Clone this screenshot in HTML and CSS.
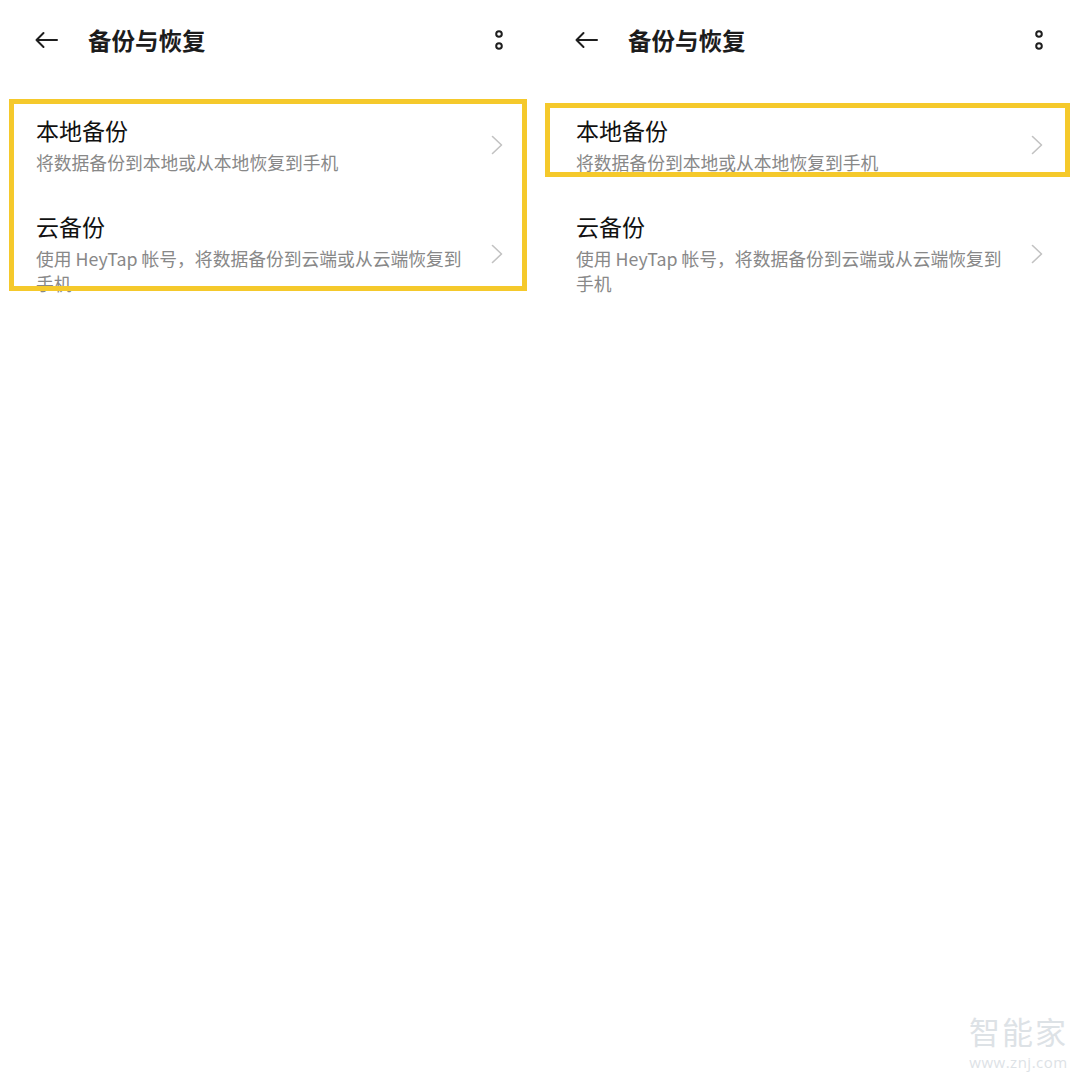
FILE: index.html
```html
<!DOCTYPE html>
<html lang="zh-CN">
<head>
<meta charset="utf-8">
<title>备份与恢复</title>
<link rel="stylesheet" href="styles.css">
</head>
<body>
<div class="screen">
  <section class="panel">
    <header class="bar">
      <svg class="back" width="24" height="18" viewBox="0 0 24 18"><path d="M23 9H2.5M9.5 2L2.5 9L9.5 16" fill="none" stroke="#1e1e1e" stroke-width="2" stroke-linecap="round" stroke-linejoin="round"/></svg>
      <h1 class="title">备份与恢复</h1>
      <svg class="more" width="10" height="20" viewBox="0 0 10 20"><circle cx="5" cy="4" r="2.8" fill="none" stroke="#1e1e1e" stroke-width="2"/><circle cx="5" cy="16" r="2.8" fill="none" stroke="#1e1e1e" stroke-width="2"/></svg>
    </header>
    <div class="list">
      <div class="item">
        <div class="text">
          <div class="item-title">本地备份</div>
          <div class="item-sub">将数据备份到本地或从本地恢复到手机</div>
        </div>
        <svg class="chev" width="12" height="20" viewBox="0 0 12 20"><path d="M1.5 1.5L10.5 10L1.5 18.5" fill="none" stroke="#c2c2c2" stroke-width="1.6" stroke-linecap="round" stroke-linejoin="round"/></svg>
      </div>
      <div class="item">
        <div class="text">
          <div class="item-title">云备份</div>
          <div class="item-sub">使用 HeyTap 帐号，将数据备份到云端或从云端恢复到手机</div>
        </div>
        <svg class="chev" width="12" height="20" viewBox="0 0 12 20"><path d="M1.5 1.5L10.5 10L1.5 18.5" fill="none" stroke="#c2c2c2" stroke-width="1.6" stroke-linecap="round" stroke-linejoin="round"/></svg>
      </div>
      <div class="hl hl-both"></div>
    </div>
  </section>
  <section class="panel">
    <header class="bar">
      <svg class="back" width="24" height="18" viewBox="0 0 24 18"><path d="M23 9H2.5M9.5 2L2.5 9L9.5 16" fill="none" stroke="#1e1e1e" stroke-width="2" stroke-linecap="round" stroke-linejoin="round"/></svg>
      <h1 class="title">备份与恢复</h1>
      <svg class="more" width="10" height="20" viewBox="0 0 10 20"><circle cx="5" cy="4" r="2.8" fill="none" stroke="#1e1e1e" stroke-width="2"/><circle cx="5" cy="16" r="2.8" fill="none" stroke="#1e1e1e" stroke-width="2"/></svg>
    </header>
    <div class="list">
      <div class="item">
        <div class="text">
          <div class="item-title">本地备份</div>
          <div class="item-sub">将数据备份到本地或从本地恢复到手机</div>
        </div>
        <svg class="chev" width="12" height="20" viewBox="0 0 12 20"><path d="M1.5 1.5L10.5 10L1.5 18.5" fill="none" stroke="#c2c2c2" stroke-width="1.6" stroke-linecap="round" stroke-linejoin="round"/></svg>
      </div>
      <div class="item">
        <div class="text">
          <div class="item-title">云备份</div>
          <div class="item-sub">使用 HeyTap 帐号，将数据备份到云端或从云端恢复到手机</div>
        </div>
        <svg class="chev" width="12" height="20" viewBox="0 0 12 20"><path d="M1.5 1.5L10.5 10L1.5 18.5" fill="none" stroke="#c2c2c2" stroke-width="1.6" stroke-linecap="round" stroke-linejoin="round"/></svg>
      </div>
      <div class="hl hl-local"></div>
    </div>
  </section>
  <div class="watermark">
    <div class="wm-name">智能家</div>
    <div class="wm-url">www.znj.com</div>
  </div>
</div>
</body>
</html>
```

FILE: styles.css
```css
* { box-sizing: border-box; }
html, body { margin: 0; padding: 0; background: #fff; }
body {
  font-family: "Noto Sans CJK SC", "Noto Sans", sans-serif;
  color: #1a1a1a;
}
.screen {
  position: relative;
  width: 1080px;
  height: 1080px;
  display: flex;
  background: #fff;
}
.panel {
  width: 540px;
  display: flex;
  flex-direction: column;
}
.bar {
  height: 80px;
  display: flex;
  align-items: center;
  padding: 0 36px 0 34px;
}
.back { flex: none; }
.title {
  margin: 0 0 0 30px;
  flex: 1;
  font-size: 23.5px;
  font-weight: 700;
  line-height: 30px;
  color: #1c1c1c;
}
.more { flex: none; }
.list {
  position: relative;
  padding-top: 17px;
}
.item {
  display: flex;
  align-items: center;
  padding: 18px 37px 18px 36px;
}
.text {
  flex: 1;
  padding-right: 14px;
}
.item-title {
  font-size: 23px;
  font-weight: 400;
  line-height: 30px;
  color: #111;
}
.item-sub {
  margin-top: 5px;
  font-size: 17.8px;
  line-height: 25px;
  color: #888;
}
.chev { flex: none; }
.hl {
  position: absolute;
  border: 5px solid #f5c92b;
}
.hl-both {
  left: 9px;
  top: 19px;
  width: 518px;
  height: 192px;
}
.hl-local {
  left: 5px;
  top: 23px;
  width: 525px;
  height: 74px;
}
.watermark {
  position: absolute;
  right: 12px;
  bottom: 10px;
  display: flex;
  flex-direction: column;
  align-items: center;
  gap: 8px;
  color: #dde2e6;
}
.wm-name {
  font-size: 31px;
  line-height: 31px;
  letter-spacing: 2px;
}
.wm-url {
  font-family: "Open Sans", "Noto Sans", sans-serif;
  font-size: 15px;
  line-height: 16px;
  letter-spacing: 0.5px;
}
```
